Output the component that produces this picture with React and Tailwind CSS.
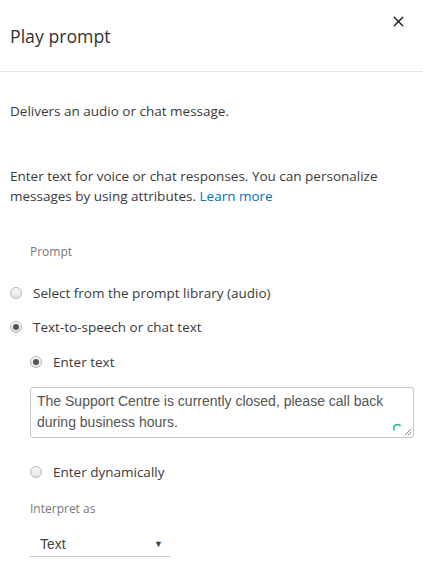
import { X } from "lucide-react";

const Radio = ({ checked }) => (
  <span className="w-[12px] h-[12px] rounded-full border border-[#b5b5b5] bg-gradient-to-b from-[#fafafa] to-[#e4e4e4] flex items-center justify-center shrink-0">
    {checked && <span className="w-[6px] h-[6px] rounded-full bg-[#555]" />}
  </span>
);

export default function App() {
  return (
    <div className="w-[423px] h-[563px] bg-white text-[#3a3a3a] font-['Open_Sans',sans-serif] overflow-hidden">
      {/* Header */}
      <div className="h-[72px] border-b border-[#e6e6e6] flex items-start justify-between pl-[10px] pr-[16px]">
        <h1 className="text-[17.7px] text-[#333] mt-[24px] leading-[24px]">Play prompt</h1>
        <button className="mt-[13px] text-[#222]">
          <X size={17} strokeWidth={2} />
        </button>
      </div>

      <div className="px-[10px] text-[13.5px] leading-[20px]">
        <p className="mt-[29px]">Delivers an audio or chat message.</p>
        <p className="mt-[45px]">
          Enter text for voice or chat responses. You can personalize messages by using attributes.{" "}
          <span className="text-[#0073bb]">Learn more</span>
        </p>

        <div className="pl-[20px] mt-[36px] text-[12px] text-[#777]">Prompt</div>

        <label className="flex items-center gap-[11px] mt-[21px]">
          <Radio />
          <span>Select from the prompt library (audio)</span>
        </label>
        <label className="flex items-center gap-[11px] mt-[14px]">
          <Radio checked />
          <span>Text-to-speech or chat text</span>
        </label>

        <div className="pl-[20px]">
          <label className="flex items-center gap-[11px] mt-[15px]">
            <Radio checked />
            <span>Enter text</span>
          </label>

          <div className="relative mt-[15px] mr-[-1px] h-[51px] border border-[#c8c8c8] rounded-[3px] px-[6px] pt-[3px] font-['Liberation_Sans',sans-serif] text-[14px] leading-[21px] text-[#555]">
            The Support Centre is currently closed, please call back during business hours.
            <svg className="absolute right-[11px] bottom-[5px]" width="9" height="9" viewBox="0 0 9 9">
              <path d="M1.5 7.5 A3.5 3.5 0 0 1 7.5 3" fill="none" stroke="#1bbf95" strokeWidth="1.6" />
            </svg>
            <svg className="absolute right-[1px] bottom-[1px]" width="9" height="9" viewBox="0 0 9 9">
              <path d="M8 2 L2 8 M8 5 L5 8" stroke="#888" strokeWidth="1" />
            </svg>
          </div>

          <label className="flex items-center gap-[11px] mt-[24px]">
            <Radio />
            <span>Enter dynamically</span>
          </label>

          <div className="mt-[17px] text-[12px] text-[#777]">Interpret as</div>

          <div className="mt-[12px] w-[140px] h-[26px] border-b border-[#c8c8c8] flex items-center justify-between pl-[10px] pr-[7px]">
            <span className="font-['Liberation_Sans',sans-serif] text-[14px] text-[#444]">Text</span>
            <span className="text-[9px] text-[#444]">▼</span>
          </div>
        </div>
      </div>
    </div>
  );
}
